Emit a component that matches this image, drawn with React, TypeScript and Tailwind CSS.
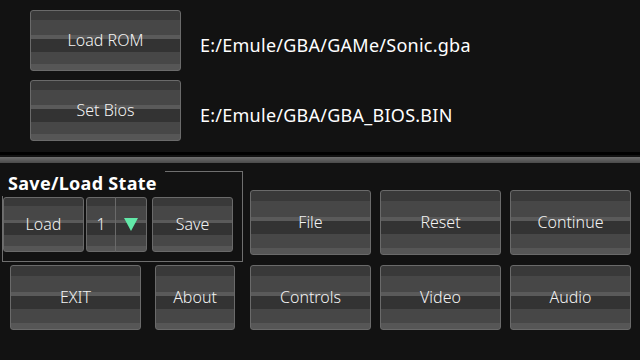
import React from "react";

const stripes =
  "bg-[linear-gradient(to_bottom,#393939_0%,#393939_16%,#474747_16%,#474747_41%,#5a5a5a_41%,#5a5a5a_48%,#333333_48%,#333333_69%,#474747_69%,#474747_90%,#565656_90%,#565656_100%)]";

function Btn({ label, className = "" }: { label: string; className?: string }) {
  return (
    <div
      className={`flex items-center justify-center pb-[2px] rounded-[3px] border border-[#6a6a6a] text-[16px] font-light text-[#f2f2f2] ${stripes} ${className}`}
    >
      {label}
    </div>
  );
}

export default function App() {
  return (
    <div
      className="w-[640px] h-[360px] overflow-hidden bg-[#121212] text-white"
      style={{ fontFamily: '"Noto Sans", "Open Sans", sans-serif' }}
    >
      {/* rom / bios */}
      <div className="h-[152px] pt-[10px] pl-[30px] flex flex-col gap-[9px]">
        <div className="flex items-center">
          <Btn label="Load ROM" className="w-[151px] h-[61px]" />
          <span className="ml-[19px] mt-[9px] text-[18px] tracking-[0.25px]">E:/Emule/GBA/GAMe/Sonic.gba</span>
        </div>
        <div className="flex items-center">
          <Btn label="Set Bios" className="w-[151px] h-[61px]" />
          <span className="ml-[19px] mt-[9px] text-[18px] tracking-[0.25px]">E:/Emule/GBA/GBA_BIOS.BIN</span>
        </div>
      </div>

      {/* separator */}
      <div className="h-[3px] bg-black" />
      <div className="h-[2px]" />
      <div className="h-[6px] bg-[linear-gradient(to_bottom,#6e6e6e,#4a4a4a)]" />

      <div className="flex">
        {/* left column */}
        <div className="w-[243px] pl-[2px] pt-[8px] flex flex-col">
          <div className="flex">
            <div className="w-[163px] h-[25px] pl-[6px] text-[18px] tracking-[0.3px] font-bold leading-[24px]">
              Save/Load State
            </div>
            <div className="flex-1 border-t border-r border-[#6f6f6f]" />
          </div>
          <div className="h-[66px] border-l border-r border-b border-[#6f6f6f] pt-[1px] flex">
            <Btn label="Load" className="w-[81px] h-[55px]" />
            <div className="ml-[2px] flex h-[55px]">
              <Btn label="1" className="w-[30px] h-[55px] rounded-r-none" />
              <div
                className={`w-[32px] h-[55px] -ml-[1px] flex items-center justify-center rounded-[3px] rounded-l-none border border-[#6a6a6a] ${stripes}`}
              >
                <svg width="14" height="13" viewBox="0 0 14 13">
                  <polygon points="0,0 14,0 7,13" fill="#62e8a8" />
                </svg>
              </div>
            </div>
            <Btn label="Save" className="ml-[5px] w-[81px] h-[55px]" />
          </div>
          <div className="mt-[3px] flex pl-[8px]">
            <Btn label="EXIT" className="w-[131px] h-[65px]" />
            <Btn label="About" className="ml-[14px] w-[80px] h-[65px]" />
          </div>
        </div>

        {/* right grid */}
        <div className="ml-[7px] pt-[27px] grid grid-cols-[121px_121px_121px] gap-x-[9px] gap-y-[10px]">
          <Btn label="File" className="h-[65px]" />
          <Btn label="Reset" className="h-[65px]" />
          <Btn label="Continue" className="h-[65px]" />
          <Btn label="Controls" className="h-[65px]" />
          <Btn label="Video" className="h-[65px]" />
          <Btn label="Audio" className="h-[65px]" />
        </div>
      </div>
    </div>
  );
}
